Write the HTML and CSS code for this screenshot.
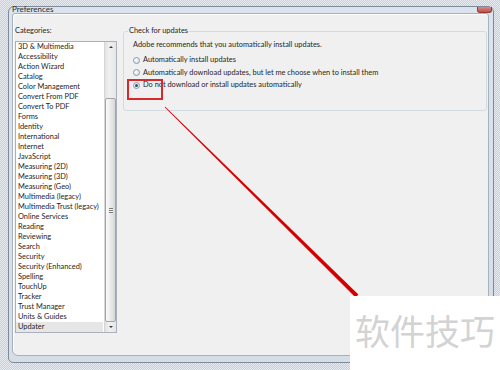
FILE: index.html
```html
<!DOCTYPE html>
<html lang="en">
<head>
<meta charset="UTF-8">
<title>Preferences</title>
<link rel="stylesheet" href="styles.css">
</head>
<body>

<div class="window">
  <div class="titlebar">
    <span class="title">Preferences</span>
    <span class="close-btn"></span>
  </div>
  <div class="client">
    <div class="categories">
      <div class="label">Categories:</div>
      <div class="listbox">
        <ul class="items">
          <li>3D &amp; Multimedia</li>
          <li>Accessibility</li>
          <li>Action Wizard</li>
          <li>Catalog</li>
          <li>Color Management</li>
          <li>Convert From PDF</li>
          <li>Convert To PDF</li>
          <li>Forms</li>
          <li>Identity</li>
          <li>International</li>
          <li>Internet</li>
          <li>JavaScript</li>
          <li>Measuring (2D)</li>
          <li>Measuring (3D)</li>
          <li>Measuring (Geo)</li>
          <li>Multimedia (legacy)</li>
          <li>Multimedia Trust (legacy)</li>
          <li>Online Services</li>
          <li>Reading</li>
          <li>Reviewing</li>
          <li>Search</li>
          <li>Security</li>
          <li>Security (Enhanced)</li>
          <li>Spelling</li>
          <li>TouchUp</li>
          <li>Tracker</li>
          <li>Trust Manager</li>
          <li>Units &amp; Guides</li>
          <li class="selected">Updater</li>
        </ul>
        <div class="scrollbar">
          <span class="arrow-btn"><span class="arrow up"></span></span>
          <span class="track"></span>
          <span class="thumb"><span class="grip"></span></span>
          <span class="arrow-btn"><span class="arrow down"></span></span>
        </div>
      </div>
    </div>

    <div class="panel">
      <fieldset class="group">
        <legend>Check for updates</legend>
        <div class="group-body">
          <p>Adobe recommends that you automatically install updates.</p>
          <label class="radio"><span class="dot"></span>Automatically install updates</label>
          <label class="radio"><span class="dot"></span>Automatically download updates, but let me choose when to install them</label>
          <label class="radio"><span class="dot checked"></span>Do not download or install updates automatically</label>
        </div>
      </fieldset>
    </div>
  </div>
</div>

<!-- red markup drawn over the screenshot -->
<svg class="annotation" width="500" height="370" viewBox="0 0 500 370">
  <rect x="128" y="80" width="34" height="19" fill="none" stroke="#d82a2a" stroke-width="2"/>
  <polygon points="164.7,107.3 165.3,106.7 358.4,294.6 355.6,297.4" fill="#d40000"/>
</svg>

<div class="watermark">软件技巧</div>

</body>
</html>
```

FILE: styles.css
```css
body {
  margin: 0;
  width: 500px;
  height: 370px;
  overflow: hidden;
  position: relative;
  font-family: Lato, "Liberation Sans", sans-serif;
  font-size: 7.4px;
  color: #1e1e1e;
  background: repeating-conic-gradient(#c6cfd9 0 25%, #e8ecf1 0 50%) 0 0 / 2px 2px;
}

.window {
  position: absolute;
  left: 8px;
  top: 6px;
  width: 486px;
  height: 357px;
  box-sizing: border-box;
  border: 1px solid #7c8a99;
  border-radius: 6px 6px 5px 5px;
  background: linear-gradient(#dbe4ee, #d5dde6);
  display: flex;
  flex-direction: column;
}

.titlebar {
  height: 6px;
  padding-left: 3px;
  position: relative;
}

.title {
  display: block;
  font-size: 8px;
  line-height: 6px;
  margin-top: -1px;
  color: #2a2a2a;
}

.close-btn {
  position: absolute;
  right: 1px;
  top: 0;
  width: 15px;
  height: 6px;
  border-radius: 0 0 3px 3px;
  background: linear-gradient(#d98a84, #c0504a);
  border: 1px solid #8e3a36;
  border-top: none;
  box-sizing: border-box;
}

.client {
  flex: 1;
  margin: 0 4px 6px 3px;
  background: #f0f0f0;
  border: 1px solid #a5b1bd;
  border-radius: 3px 3px 3px 6px;
  box-shadow: inset 1px 1px 0 #fff;
  display: flex;
  gap: 6px;
  padding: 12px 0 0 2px;
}

.categories {
  width: 102px;
}

.label {
  line-height: 10px;
  margin-bottom: 5px;
}

.listbox {
  height: 292px;
  box-sizing: border-box;
  border: 1px solid #a9b2bc;
  background: #fff;
  display: flex;
}

.items {
  flex: 1;
  list-style: none;
  margin: 0;
  padding: 0;
}

.items li {
  line-height: 10px;
  height: 10px;
  padding-left: 2px;
  white-space: nowrap;
}

.items li.selected {
  background: #e6e6e6;
  margin-right: 1px;
}

.scrollbar {
  width: 11px;
  display: flex;
  flex-direction: column;
  background: linear-gradient(90deg, #e2e2e2, #f0f0f0 40%, #e6e6e6);
  border-left: 1px solid #d6d6d6;
}

.arrow-btn {
  height: 10px;
  display: flex;
  align-items: center;
  justify-content: center;
}

.arrow {
  width: 0;
  height: 0;
  border-left: 2px solid transparent;
  border-right: 2px solid transparent;
}

.arrow.up {
  border-bottom: 2px solid #3a3a3a;
}

.arrow.down {
  border-top: 2px solid #3a3a3a;
}

.track {
  height: 46px;
}

.thumb {
  height: 224px;
  box-sizing: border-box;
  border: 1px solid #a4a4a4;
  border-radius: 2px;
  background: linear-gradient(90deg, #fafafa, #eaeaea 50%, #d8d8d8);
  display: flex;
  align-items: center;
  justify-content: center;
}

.grip {
  width: 4px;
  height: 5px;
  background: repeating-linear-gradient(#7a7a7a 0 1px, #f4f4f4 1px 2px);
}

.panel {
  flex: 1;
  padding-right: 1px;
}

.group {
  margin: 0;
  padding: 0 0 18px 0;
  border: 1px solid #d3dbe2;
  border-radius: 3px;
  min-width: 0;
}

.group legend {
  margin-left: 4px;
  padding: 0 1px;
  line-height: 10px;
}

.group-body {
  padding-left: 9px;
}

.group-body p {
  margin: 4px 0 4px;
  line-height: 10px;
}

.radio {
  display: flex;
  align-items: center;
  gap: 3px;
  line-height: 12.5px;
  height: 12.5px;
  white-space: nowrap;
}

.dot {
  width: 7px;
  height: 7px;
  box-sizing: border-box;
  border: 1px solid #8d99a5;
  border-radius: 50%;
  background: radial-gradient(circle at 40% 40%, #fbfcfd, #d6dce2);
  display: flex;
  align-items: center;
  justify-content: center;
}

.dot.checked::after {
  content: "";
  width: 3px;
  height: 3px;
  border-radius: 50%;
  background: #2c4f78;
}

.annotation {
  position: absolute;
  left: 0;
  top: 0;
  pointer-events: none;
}

.watermark {
  position: absolute;
  left: 350px;
  top: 296px;
  width: 150px;
  height: 74px;
  box-sizing: border-box;
  background: #fff;
  padding: 16px 0 0 5px;
  font-family: "Noto Sans CJK SC", sans-serif;
  font-size: 35px;
  line-height: 1;
  color: #d3d3d3;
  white-space: nowrap;
}
```
